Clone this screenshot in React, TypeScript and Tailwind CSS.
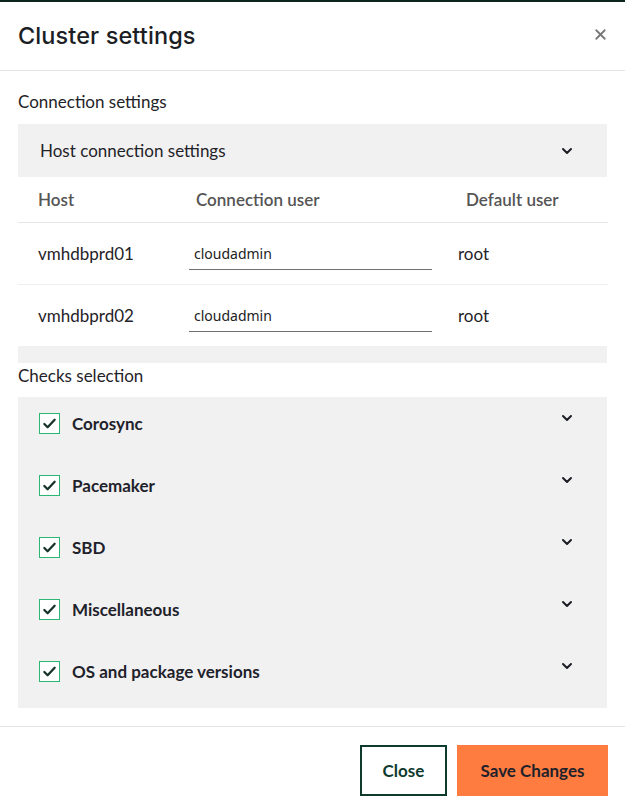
import { ChevronDown, X } from "lucide-react";

const hosts = [
  { name: "vmhdbprd01", user: "cloudadmin", defaultUser: "root" },
  { name: "vmhdbprd02", user: "cloudadmin", defaultUser: "root" },
];

const checks = [
  "Corosync",
  "Pacemaker",
  "SBD",
  "Miscellaneous",
  "OS and package versions",
];

function Checkbox() {
  return (
    <span className="flex items-center justify-center w-[21px] h-[21px] border border-[#2bb673] bg-white">
      <svg viewBox="0 0 16 16" className="w-[15px] h-[15px]">
        <path d="M2.5 8.5 L6 12 L13.5 4" fill="none" stroke="#16332b" strokeWidth="2.4" strokeLinecap="round" strokeLinejoin="round" />
      </svg>
    </span>
  );
}

export default function App() {
  return (
    <div className="w-[625px] h-[808px] bg-white border-t-[2px] border-[#0b241d] font-['Lato',sans-serif] text-[#1f2328] flex flex-col">
      <div className="h-[69px] shrink-0 flex items-center justify-between pl-[18px] pr-[18px] border-b border-[#e3e3e6]">
        <h2 className="font-['Inter',sans-serif] text-[23.5px] font-medium text-[#1b1e24] tracking-[0.1px]">
          Cluster settings
        </h2>
        <X className="w-[17px] h-[17px] text-[#777] -mt-[4px] mr-[-2px]" strokeWidth={2.5} />
      </div>

      <div className="px-[18px] pt-[20px] flex-1">
        <div className="text-[17px] leading-[22px] mb-[11px]">Connection settings</div>

        <div className="bg-[#f1f1f1] h-[53px] flex items-center justify-between pl-[22px] pr-[32px]">
          <span className="text-[17px]">Host connection settings</span>
          <ChevronDown className="w-[16px] h-[16px] text-[#1b1e24]" strokeWidth={3} />
        </div>

        <div className="grid grid-cols-[171px_277px_142px] text-[17px]">
          <div className="h-[46px] flex items-center pl-[20px] text-[#555] font-semibold border-b border-[#e6e6e6]">Host</div>
          <div className="h-[46px] flex items-center pl-[7px] text-[#555] font-semibold border-b border-[#e6e6e6]">Connection user</div>
          <div className="h-[46px] flex items-center text-[#555] font-semibold border-b border-[#e6e6e6]">Default user</div>
          {hosts.map((h, i) => (
            <div key={h.name} className="contents">
              <div className={`flex items-center pl-[20px] ${i === 0 ? "h-[62px] border-b border-[#efefef]" : "h-[61px]"}`}>
                {h.name}
              </div>
              <div className={`flex items-center ${i === 0 ? "h-[62px] border-b border-[#efefef]" : "h-[61px]"}`}>
                <div className="w-[243px] pt-[6px] pb-[5px] pl-[5px] border-b border-[#707070] text-[14px] font-['Noto_Sans',sans-serif] text-[#222]">
                  {h.user}
                </div>
              </div>
              <div className={`flex items-center -ml-[8px] ${i === 0 ? "h-[62px] border-b border-[#efefef]" : "h-[61px]"}`}>
                {h.defaultUser}
              </div>
            </div>
          ))}
        </div>
        <div className="bg-[#f1f1f1] h-[17px]" />

        <div className="text-[17px] leading-[22px] mt-[2px] mb-[10px]">Checks selection</div>

        <div className="bg-[#f1f1f1] pt-[14px] pb-[13px] flex flex-col gap-[26px]">
          {checks.map((c) => (
            <div key={c} className="h-[36px] flex items-start justify-between pl-[21px] pr-[32px]">
              <div className="flex items-center gap-[12px]">
                <Checkbox />
                <span className="text-[17px] font-bold text-[#1f222b]">{c}</span>
              </div>
              <ChevronDown className="w-[16px] h-[16px] text-[#1b1e24] mt-[-1px]" strokeWidth={3} />
            </div>
          ))}
        </div>
      </div>

      <div className="border-t border-[#e3e3e6] h-[82px] shrink-0 flex items-start justify-end gap-[10px] pr-[17px] pt-[18px]">
        <button className="w-[87px] h-[51px] border-[2px] border-[#0f3a2e] text-[#0f3a2e] font-bold text-[17px] bg-white">
          Close
        </button>
        <button className="w-[151px] h-[51px] bg-[#fe7c3f] text-[#1f222b] font-bold text-[17px]">
          Save Changes
        </button>
      </div>
    </div>
  );
}
